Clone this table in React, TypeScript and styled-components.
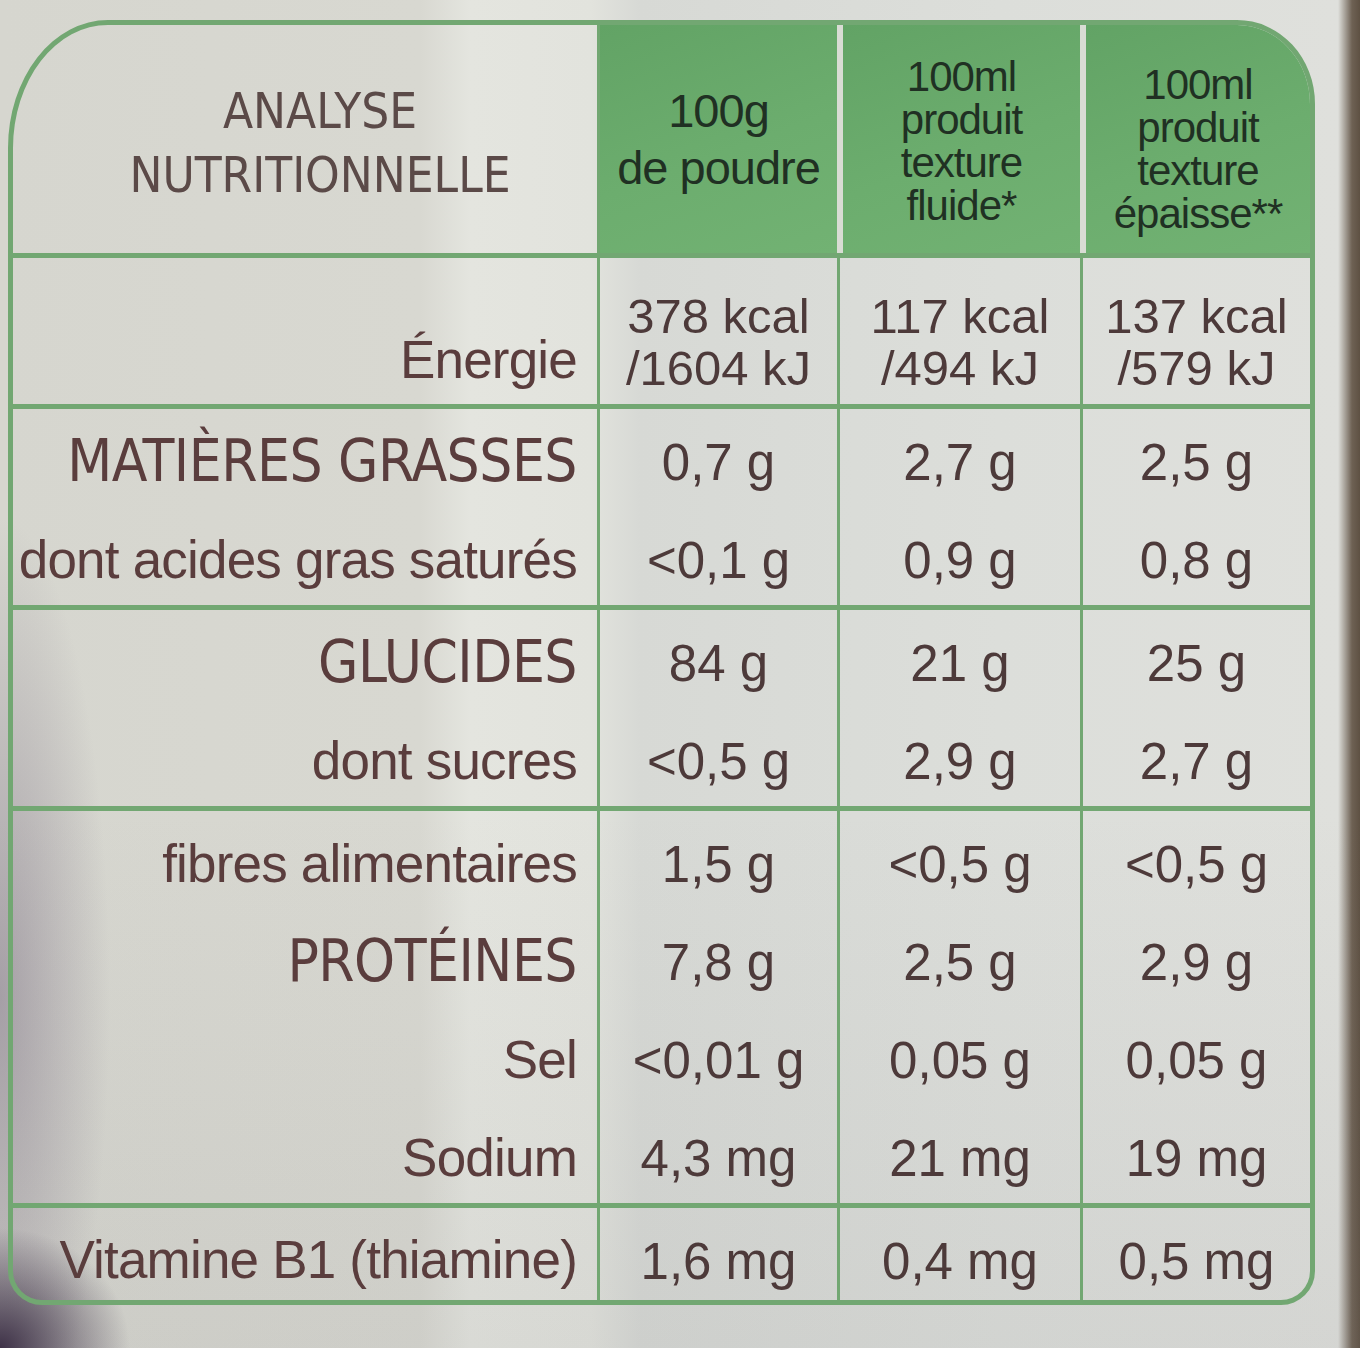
import React from "react";
import styled, { createGlobalStyle } from "styled-components";

const GREEN = "#72a772";
const INK = "#5a3d3d";
const NARROW = `"Liberation Sans Narrow", "DejaVu Sans Condensed", "Liberation Sans", sans-serif`;

const GlobalStyle = createGlobalStyle`
  html, body { margin: 0; padding: 0; }
  body {
    width: 1360px;
    height: 1348px;
    overflow: hidden;
    font-family: "Liberation Sans", Arial, sans-serif;
  }
`;

const Page = styled.main`
  width: 1360px;
  height: 1348px;
  box-sizing: border-box;
  padding: 20px 0 0 8px;
  background:
    radial-gradient(ellipse 130px 120px at 0% 100%, rgba(55, 42, 65, 0.95), rgba(55, 42, 65, 0) 100%),
    radial-gradient(ellipse 110px 480px at 0% 74%, rgba(120, 108, 128, 0.5), rgba(120, 108, 128, 0) 100%),
    linear-gradient(180deg, rgba(0, 0, 0, 0) 60%, rgba(120, 120, 125, 0.1) 100%),
    linear-gradient(90deg, rgba(60, 50, 40, 0) 1338px, rgba(90, 75, 60, 0.85) 1352px, rgba(80, 65, 50, 0.9) 1360px),
    linear-gradient(90deg, #d6d6cf 0px, #d8d8d1 420px, #e4e5df 470px, #e2e3dd 590px, #d7d9d5 640px, #dcdeda 1000px, #dfe0dc 1340px);
`;

const Table = styled.section`
  width: 1307px;
  box-sizing: border-box;
  border: 5px solid ${GREEN};
  border-radius: 100px 78px 34px 34px / 128px 84px 34px 34px;
  overflow: hidden;
  color: ${INK};
`;

const Row = styled.div<{ $h: number; $line?: boolean }>`
  display: grid;
  grid-template-columns: 584px 240px 243px 1fr;
  height: ${(p) => p.$h}px;
  border-bottom: ${(p) => (p.$line ? `5px solid ${GREEN}` : "none")};
`;

const Group = styled.div<{ $last?: boolean }>`
  display: flex;
  flex-direction: column;
  border-bottom: ${(p) => (p.$last ? "none" : `5px solid ${GREEN}`)};
`;

const HeadLabel = styled.div`
  display: flex;
  flex-direction: column;
  align-items: center;
  justify-content: center;
  padding: 10px 0 0 30px;
  font-family: ${NARROW};
  font-size: 49px;
  line-height: 64px;
  color: #5b4a48;
`;

const HeadCell = styled.div<{ $first?: boolean; $top?: number }>`
  display: flex;
  flex-direction: column;
  align-items: center;
  justify-content: center;
  padding-top: ${(p) => p.$top ?? 0}px;
  text-align: center;
  background: linear-gradient(160deg, #62a365 0%, #6cad6e 55%, #72b273 100%);
  border-left: ${(p) => (p.$first ? "3px" : "6px")} solid ${(p) => (p.$first ? GREEN : "#d9dcd4")};
  color: #203023;
  letter-spacing: -1px;
`;

const HeadLine = styled.span<{ $big?: boolean }>`
  font-size: ${(p) => (p.$big ? 47 : 42)}px;
  line-height: ${(p) => (p.$big ? 57 : 43)}px;
`;

const Label = styled.div<{ $caps?: boolean; $pad?: number }>`
  display: flex;
  align-items: center;
  justify-content: flex-end;
  padding: ${(p) => p.$pad ?? 0}px 20px 0 0;
  white-space: nowrap;
  font-family: ${(p) => (p.$caps ? NARROW : `"Liberation Sans", Arial, sans-serif`)};
  font-size: ${(p) => (p.$caps ? 58 : 53)}px;
  letter-spacing: ${(p) => (p.$caps ? "-0.5px" : "-0.8px")};
`;

const Value = styled.div<{ $pad?: number }>`
  display: flex;
  align-items: center;
  justify-content: center;
  padding-top: ${(p) => p.$pad ?? 0}px;
  border-left: 3px solid ${GREEN};
  white-space: nowrap;
  font-size: 51px;
  color: #4d3a3a;
`;

const Stack = styled.div`
  display: flex;
  flex-direction: column;
  align-items: center;
  font-size: 49px;
  line-height: 52px;
`;

const EnergyLabel = styled(Label)`
  align-items: flex-end;
  padding-bottom: 14px;
`;

const EnergyValue = styled(Value)`
  align-items: flex-end;
  padding-bottom: 10px;
`;

type Line = { label: string; caps?: boolean; values: string[] };

const groups: Line[][] = [
  [
    { label: "MATIÈRES GRASSES", caps: true, values: ["0,7 g", "2,7 g", "2,5 g"] },
    { label: "dont acides gras saturés", values: ["<0,1 g", "0,9 g", "0,8 g"] },
  ],
  [
    { label: "GLUCIDES", caps: true, values: ["84 g", "21 g", "25 g"] },
    { label: "dont sucres", values: ["<0,5 g", "2,9 g", "2,7 g"] },
  ],
  [
    { label: "fibres alimentaires", values: ["1,5 g", "<0,5 g", "<0,5 g"] },
    { label: "PROTÉINES", caps: true, values: ["7,8 g", "2,5 g", "2,9 g"] },
    { label: "Sel", values: ["<0,01 g", "0,05 g", "0,05 g"] },
    { label: "Sodium", values: ["4,3 mg", "21 mg", "19 mg"] },
  ],
  [{ label: "Vitamine B1 (thiamine)", values: ["1,6 mg", "0,4 mg", "0,5 mg"] }],
];

const energy = [
  ["378 kcal", "/1604 kJ"],
  ["117 kcal", "/494 kJ"],
  ["137 kcal", "/579 kJ"],
];

export default function App() {
  return (
    <Page>
      <GlobalStyle />
      <Table>
        <Row $h={228} $line>
          <HeadLabel>
            <span>ANALYSE</span>
            <span>NUTRITIONNELLE</span>
          </HeadLabel>
          <HeadCell $first>
            <HeadLine $big>100g</HeadLine>
            <HeadLine $big>de poudre</HeadLine>
          </HeadCell>
          <HeadCell $top={4}>
            <HeadLine>100ml</HeadLine>
            <HeadLine>produit</HeadLine>
            <HeadLine>texture</HeadLine>
            <HeadLine>fluide*</HeadLine>
          </HeadCell>
          <HeadCell $top={20}>
            <HeadLine>100ml</HeadLine>
            <HeadLine>produit</HeadLine>
            <HeadLine>texture</HeadLine>
            <HeadLine>épaisse**</HeadLine>
          </HeadCell>
        </Row>
        <Row $h={146} $line>
          <EnergyLabel>Énergie</EnergyLabel>
          {energy.map((e, i) => (
            <EnergyValue key={i}>
              <Stack>
                <span>{e[0]}</span>
                <span>{e[1]}</span>
              </Stack>
            </EnergyValue>
          ))}
        </Row>
        {groups.map((g, gi) => (
          <Group key={gi} $last={gi === groups.length - 1}>
            {g.map((line) => (
              <Row key={line.label} $h={gi === groups.length - 1 ? 92 : 98}>
                <Label $caps={line.caps} $pad={gi === groups.length - 1 ? 10 : 6}>
                  {line.label}
                </Label>
                {line.values.map((v, vi) => (
                  <Value key={vi} $pad={gi === groups.length - 1 ? 14 : 8}>
                    {v}
                  </Value>
                ))}
              </Row>
            ))}
          </Group>
        ))}
      </Table>
    </Page>
  );
}
